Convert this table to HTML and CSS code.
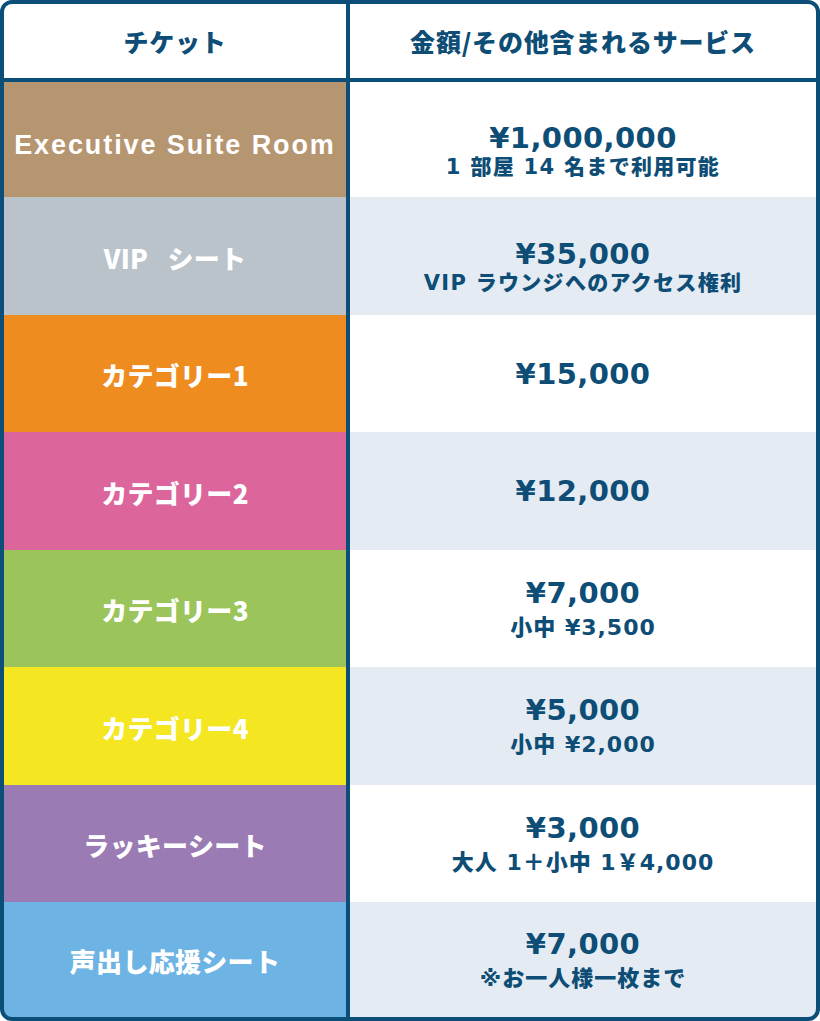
FILE: index.html
```html
<!DOCTYPE html>
<html lang="ja">
<head>
<meta charset="utf-8">
<title>チケット</title>
<link rel="stylesheet" href="styles.css">
</head>
<body>
<div class="table">
  <div class="head">チケット</div>
  <div class="head">金額/その他含まれるサービス</div>

  <div class="label c-brown latin">Executive Suite Room</div>
  <div class="value shift"><span class="price">¥1,000,000</span><span class="sub small">1 部屋 14 名まで利用可能</span></div>

  <div class="label c-gray wide">VIP シート</div>
  <div class="value alt shift"><span class="price">¥35,000</span><span class="sub small">VIP ラウンジへのアクセス権利</span></div>

  <div class="label c-orange">カテゴリー1</div>
  <div class="value"><span class="price">¥15,000</span></div>

  <div class="label c-pink">カテゴリー2</div>
  <div class="value alt"><span class="price">¥12,000</span></div>

  <div class="label c-green">カテゴリー3</div>
  <div class="value"><span class="price">¥7,000</span><span class="sub">小中 ¥3,500</span></div>

  <div class="label c-yellow">カテゴリー4</div>
  <div class="value alt"><span class="price">¥5,000</span><span class="sub">小中 ¥2,000</span></div>

  <div class="label c-purple">ラッキーシート</div>
  <div class="value"><span class="price">¥3,000</span><span class="sub">大人 1＋小中 1￥4,000</span></div>

  <div class="label c-blue">声出し応援シート</div>
  <div class="value alt"><span class="price">¥7,000</span><span class="sub">※お一人様一枚まで</span></div>
</div>
</body>
</html>
```

FILE: styles.css
```css
html, body {
  margin: 0;
  padding: 0;
  background: #ffffff;
}

.table {
  box-sizing: border-box;
  width: 820px;
  height: 1021px;
  border: 4px solid #0b4f79;
  border-radius: 12px;
  overflow: hidden;
  background: #0b4f79;
  display: grid;
  grid-template-columns: 342px 1fr;
  grid-template-rows: 78px 115px 118px 117px 118px 117px 118px 117px 1fr;
  column-gap: 4px;
}

.head {
  background: #ffffff;
  border-bottom: 4px solid #0b4f79;
  display: flex;
  align-items: center;
  justify-content: center;
  color: #0d4d76;
  font-family: "Noto Sans CJK JP", sans-serif;
  font-weight: 900;
  font-size: 25px;
  letter-spacing: 0.8px;
}

.label {
  display: flex;
  align-items: center;
  justify-content: center;
  color: #ffffff;
  font-family: "Noto Sans CJK JP", sans-serif;
  font-weight: 900;
  font-size: 26px;
  letter-spacing: 0.3px;
  padding-top: 2px;
}

.label.wide {
  word-spacing: 13px;
  letter-spacing: 0.3px;
}

.label.latin {
  font-family: "Liberation Sans", sans-serif;
  font-weight: 700;
  font-size: 27px;
  letter-spacing: 1.9px;
  padding-top: 12px;
}

.c-brown { background: #b69571; }
.c-gray { background: #bbc3ca; }
.c-orange { background: #ef8c1f; }
.c-pink { background: #dc659c; }
.c-green { background: #9bc55a; }
.c-yellow { background: #f4e621; }
.c-purple { background: #9a7bb3; }
.c-blue { background: #6db4e4; }

.value {
  background: #ffffff;
  display: flex;
  flex-direction: column;
  align-items: center;
  justify-content: center;
  color: #0d4d76;
  text-align: center;
}

.value.alt {
  background: #e4ebf2;
}

.value.shift {
  padding-top: 20px;
}

.price {
  font-family: "DejaVu Sans", sans-serif;
  font-weight: 700;
  font-size: 29px;
  line-height: 34px;
  letter-spacing: 0.4px;
}

.sub {
  font-family: "DejaVu Sans", "Noto Sans CJK JP", sans-serif;
  font-weight: 900;
  font-size: 22px;
  line-height: 28px;
  margin-top: 4px;
  letter-spacing: 1px;
}

.sub.small {
  font-size: 21px;
  line-height: 24px;
  margin-top: 0;
  letter-spacing: 1.3px;
}
```
